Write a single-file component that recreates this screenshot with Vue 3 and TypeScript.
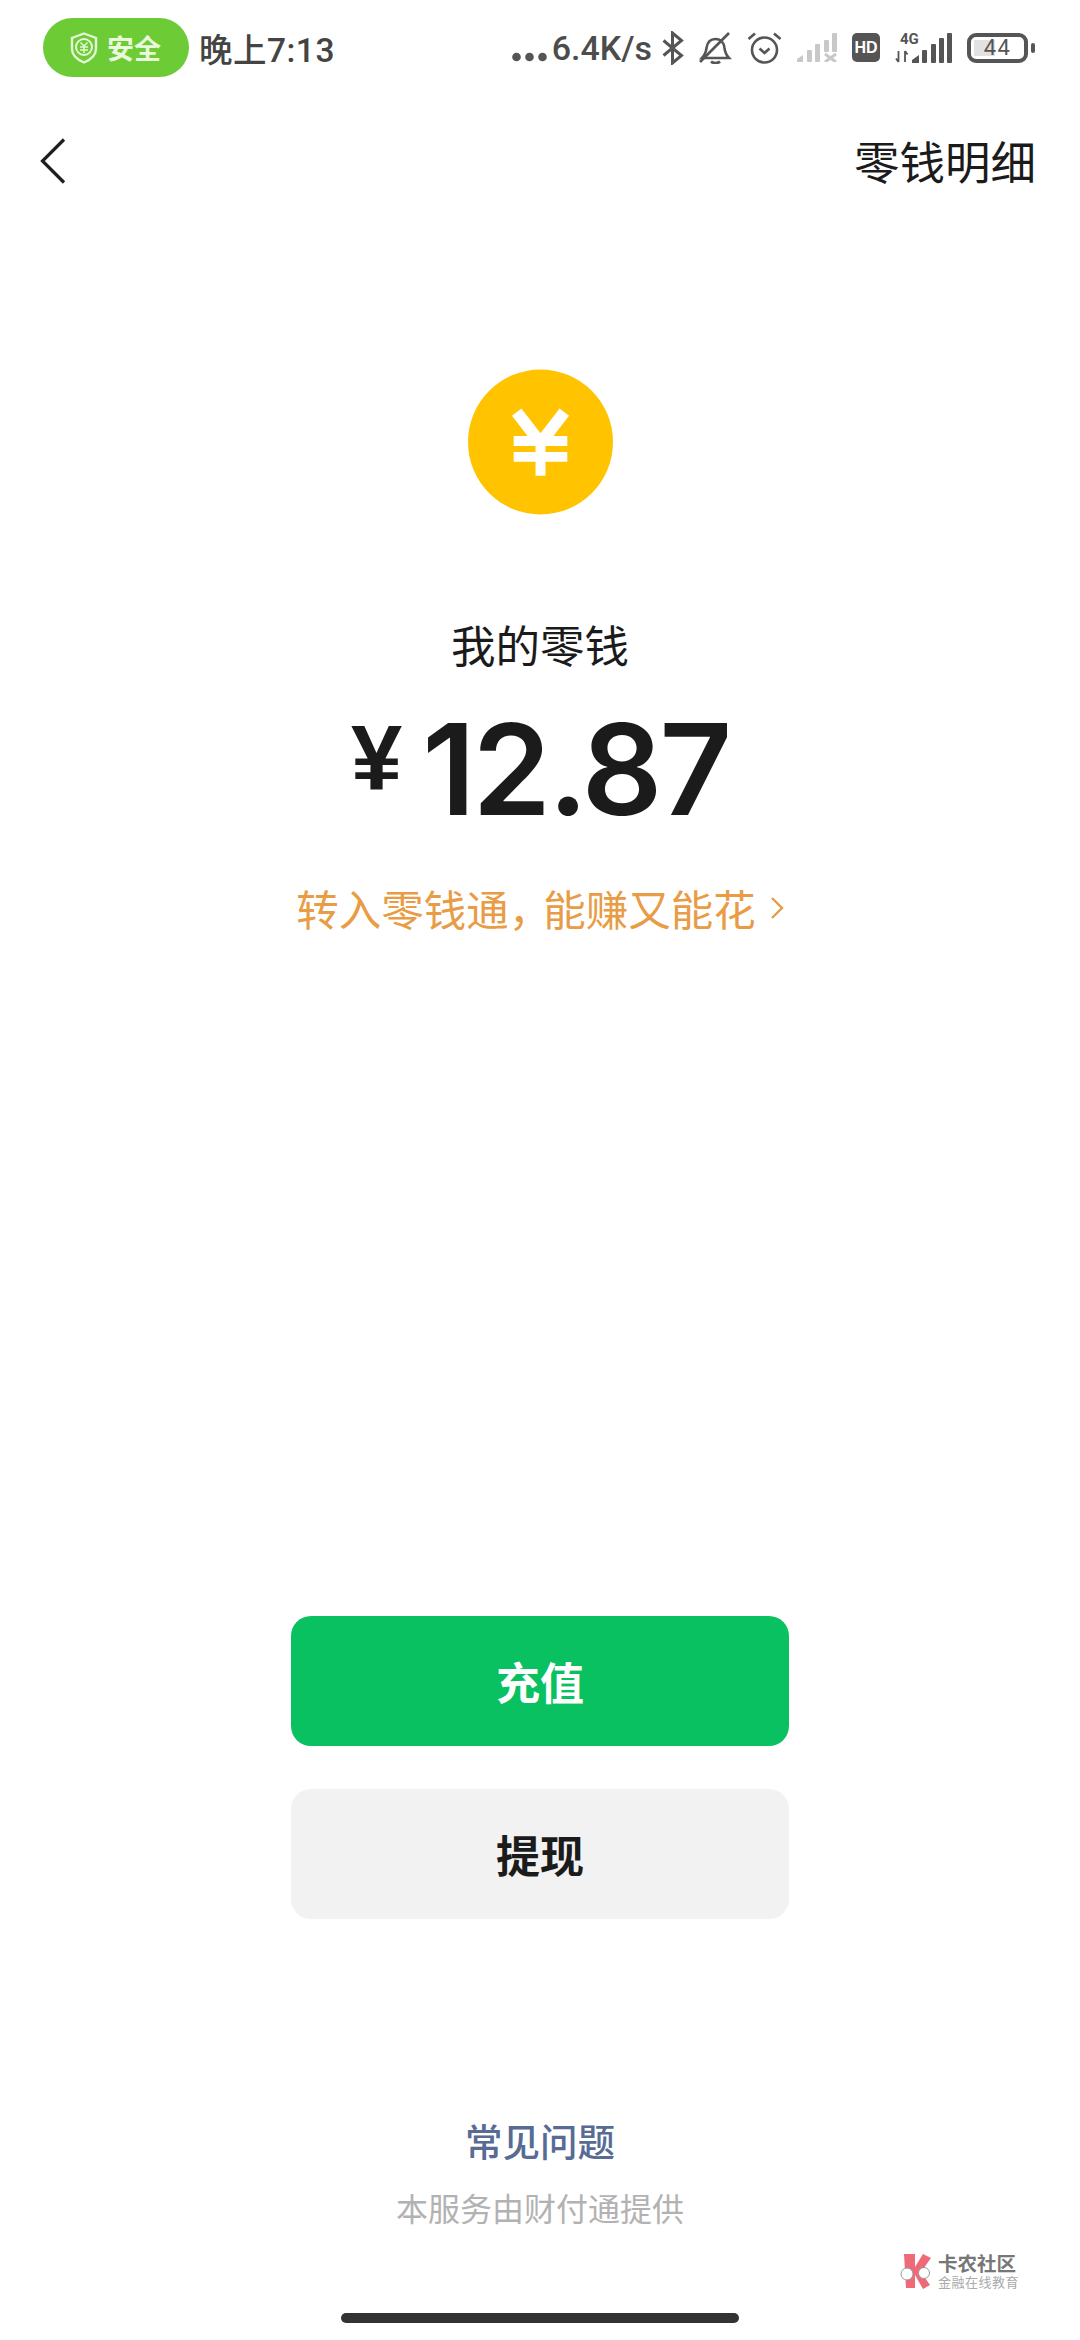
<script setup lang="ts">
const amount = '12.87'
</script>

<template>
  <div class="page">
    <header class="status">
      <div class="status__left">
        <div class="safe">
          <svg class="safe__icon" width="28" height="32" viewBox="0 0 28 32" fill="none" stroke="#e6f7d8" stroke-width="2.400">
            <path d="M14 1.500 26 6v11c0 6-5 10.500-12 13.500C7 27.500 2 23 2 17V6z" />
            <circle cx="14" cy="15" r="8" stroke-width="2" />
            <path d="M10.500 10.500 14 14l3.500-3.500M10 15h8M10 18h8M14 14v7" stroke-width="1.500" />
          </svg>
          <span>安全</span>
        </div>
        <span class="status__time">晚上7:13</span>
      </div>
      <div class="status__right">
        <div class="speed">
          <svg width="35" height="12" viewBox="0 0 35 12" fill="#555">
            <circle cx="4.500" cy="6" r="4.300" />
            <circle cx="17.500" cy="6" r="4.300" />
            <circle cx="30.500" cy="6" r="4.300" />
          </svg>
          <span class="speed__text">6.4K/s</span>
          <svg class="speed__bt" width="22" height="34" viewBox="0 0 22 34" fill="none" stroke="#555" stroke-width="3">
            <path d="M1.500 9.500 19.500 24.500 10.500 32V2L19.500 9.500 1.500 24.500" />
          </svg>
        </div>
        <svg width="33" height="32" viewBox="0 0 33 32" fill="none" stroke="#555" stroke-width="2.600">
          <path d="M3 26c3-3 4-6 4.500-10 .7-5 3.500-9 9-9s8.500 4 9 9c.5 4 1.500 7 4.500 10z" />
          <path d="M12 29.500c2 2 7 2 9 0" />
          <path d="M1 30 30 1" />
        </svg>
        <svg width="35" height="32" viewBox="0 0 35 32" fill="none" stroke="#555" stroke-width="2.600">
          <circle cx="17.500" cy="18" r="12.500" />
          <path d="M12.500 16.500 17.500 21l5-4.500" />
          <path d="M1.500 7 8 1.500M33.500 7 27 1.500" />
        </svg>
        <svg width="40" height="29" viewBox="0 0 40 29" fill="#c8c8c8">
          <path d="M0 29v-3l6-4v7z" />
          <rect x="10" y="17" width="5" height="12" rx="1" />
          <rect x="18" y="11" width="5" height="18" rx="1" />
          <rect x="27" y="7" width="5" height="12" rx="1" />
          <rect x="35" y="0" width="5" height="19" rx="1" />
          <path d="M28 21 39 29M39 21 28 29" stroke="#c8c8c8" stroke-width="3" fill="none" />
        </svg>
        <div class="hd">HD</div>
        <svg width="57" height="31" viewBox="0 0 57 31" fill="#555">
          <text x="5" y="12" class="net">4G</text>
          <path d="M3.500 19v11M1 26.500l2.500 3.500M10 30V19M10 19l2.500 3.500" fill="none" stroke="#555" stroke-width="1.800" />
          <path d="M17 31v-3l7-5v8z" />
          <rect x="27" y="18" width="5" height="13" rx="1" />
          <rect x="36" y="12" width="5" height="19" rx="1" />
          <rect x="44" y="6" width="5" height="25" rx="1" />
          <rect x="52" y="1" width="5" height="30" rx="1" />
        </svg>
        <div class="battery">
          <div class="battery__body">
            <span class="battery__fill" :style="{ width: '44%' }" />
            <span class="battery__num">44</span>
          </div>
          <span class="battery__nub" />
        </div>
      </div>
    </header>

    <nav class="nav">
      <svg width="26" height="46" viewBox="0 0 26 46" fill="none" stroke="#1f1f1f" stroke-width="3.200">
        <path d="M24 1.500 2.500 23 24 44.500" />
      </svg>
      <span class="nav__link">零钱明细</span>
    </nav>

    <main class="main">
      <svg class="coin" width="145" height="146" viewBox="0 0 146 146">
        <circle cx="73" cy="73" r="73" fill="#ffc300" />
        <path d="M49 43 73 74l24-31" fill="none" stroke="#fff" stroke-width="12" />
        <path d="M46 72h54M46 88h54M73 72v35" fill="none" stroke="#fff" stroke-width="10" />
      </svg>
      <div class="label">我的零钱</div>
      <div class="amount">
        <span class="amount__sign">¥</span>
        <span class="amount__num">{{ amount }}</span>
      </div>
      <div class="promo">
        <span>转入零钱通<span class="promo__comma">，</span>能赚又能花</span>
        <svg width="14" height="24" viewBox="0 0 14 24" fill="none" stroke="#e89c45" stroke-width="2.400">
          <path d="M2 2l10 10L2 22" />
        </svg>
      </div>
    </main>

    <div class="actions">
      <button class="btn btn--primary">充值</button>
      <button class="btn btn--plain">提现</button>
    </div>

    <footer class="foot">
      <div class="foot__faq">常见问题</div>
      <div class="foot__note">本服务由财付通提供</div>
    </footer>

    <div class="home-bar" />

    <div class="mark">
      <svg width="36" height="36" viewBox="0 0 36 36">
        <path d="M4 1h11v34H6z" fill="#ee6a78" />
        <path d="M15 14 23 1l8 4-10 14 9 13-7 4-8-14z" fill="#ee6a78" />
        <circle cx="7" cy="21" r="6" fill="#fff" stroke="#999" stroke-width="1" />
        <circle cx="24" cy="20" r="5.500" fill="#fff" stroke="#999" stroke-width="1" />
      </svg>
      <div class="mark__text">
        <div class="mark__name">卡农社区</div>
        <div class="mark__sub">金融在线教育</div>
      </div>
    </div>
  </div>
</template>

<style scoped>
.page {
  position: relative;
  width: 1080px;
  height: 2340px;
  display: flex;
  flex-direction: column;
  background: #fff;
  overflow: hidden;
  font-family: "Noto Sans CJK SC", "Noto Sans", sans-serif;
  color: #1b1b1b;
}
.status {
  display: flex;
  justify-content: space-between;
  align-items: center;
  height: 59px;
  margin-top: 18px;
  padding: 0 45px 0 43px;
}
.status__left {
  display: flex;
  align-items: center;
  gap: 10px;
}
.safe {
  width: 146px;
  height: 59px;
  box-sizing: border-box;
  padding-left: 27px;
  display: flex;
  align-items: center;
  gap: 9px;
  border-radius: 30px;
  background: #6dcb35;
  color: #e9f9dc;
  font-size: 27px;
  font-weight: 700;
}
.status__time {
  font-family: Roboto, "Noto Sans CJK SC", sans-serif;
  font-size: 33.500px;
  font-weight: 500;
  color: #444;
  letter-spacing: 0.500px;
}
.status__right {
  display: flex;
  align-items: center;
  gap: 15px;
}
.speed {
  display: flex;
  align-items: center;
  gap: 5px;
}
.speed svg:first-child {
  margin-top: 18px;
}
.speed__text {
  font-family: Roboto, sans-serif;
  font-size: 34px;
  font-weight: 500;
  line-height: 44px;
  color: #4c4c4c;
}
.speed__bt {
  margin-left: 5px;
}
.net {
  font-family: Roboto, sans-serif;
  font-size: 15px;
  font-weight: 700;
}
.hd {
  width: 28px;
  height: 29px;
  border-radius: 5px;
  background: #555;
  color: #fff;
  font-family: "Liberation Sans", sans-serif;
  font-size: 16px;
  font-weight: 700;
  line-height: 29px;
  text-align: center;
}
.battery {
  display: flex;
  align-items: center;
  gap: 3px;
}
.battery__body {
  position: relative;
  box-sizing: border-box;
  width: 61px;
  height: 30px;
  padding: 3px;
  border: 4px solid #555;
  border-radius: 9px;
}
.battery__fill {
  display: block;
  height: 100%;
  background: #e2e2e2;
}
.battery__num {
  position: absolute;
  inset: 0;
  text-align: center;
  font-family: Roboto, sans-serif;
  font-size: 22px;
  line-height: 22px;
  letter-spacing: 1.500px;
  color: #555;
}
.battery__nub {
  width: 4px;
  height: 10px;
  border-radius: 2px;
  background: #555;
}
.nav {
  display: flex;
  justify-content: space-between;
  align-items: center;
  height: 46px;
  margin-top: 61px;
  padding: 0 44px 0 40px;
}
.nav__link {
  font-size: 45.500px;
  line-height: 46px;
  margin-top: -3px;
  color: #1b1b1b;
}
.main {
  display: flex;
  flex-direction: column;
  align-items: center;
  margin-top: 185px;
}
.label {
  margin-top: 99px;
  font-size: 44.500px;
  line-height: 60px;
}
.amount {
  display: flex;
  align-items: flex-start;
  gap: 20px;
  margin-top: 30px;
  height: 130px;
}
.amount__sign {
  font-family: "Liberation Sans", sans-serif;
  font-size: 92px;
  font-weight: 700;
  line-height: 92px;
  margin-top: 8px;
}
.amount__num {
  font-family: Inter, sans-serif;
  font-size: 126px;
  font-weight: 600;
  line-height: 130px;
  letter-spacing: -3px;
}
.promo {
  display: flex;
  align-items: center;
  gap: 14px;
  margin-top: 46px;
  font-size: 42.500px;
  line-height: 56px;
  color: #e89c45;
}
.promo__comma {
  letter-spacing: -8px;
}
.actions {
  display: flex;
  flex-direction: column;
  align-items: center;
  gap: 43px;
  margin-top: 680px;
}
.btn {
  width: 498px;
  height: 130px;
  border: 0;
  border-radius: 20px;
  font-family: inherit;
  font-size: 44px;
  font-weight: 700;
}
.btn--primary {
  background: #09c160;
  color: #fff;
}
.btn--plain {
  background: #f2f2f2;
  color: #1b1b1b;
}
.foot {
  display: flex;
  flex-direction: column;
  align-items: center;
  margin-top: 191px;
}
.foot__faq {
  font-size: 37.500px;
  font-weight: 500;
  line-height: 60px;
  color: #576b95;
}
.foot__note {
  margin-top: 15px;
  font-size: 32px;
  line-height: 44px;
  color: #b2b2b2;
}
.home-bar {
  align-self: center;
  width: 398px;
  height: 10px;
  margin-top: auto;
  margin-bottom: 17px;
  border-radius: 5px;
  background: #333;
}
.mark {
  position: absolute;
  left: 900px;
  top: 2252px;
  display: flex;
  align-items: center;
  gap: 2px;
}
.mark__name {
  font-size: 19.500px;
  font-weight: 700;
  line-height: 22px;
  color: #777;
}
.mark__sub {
  font-size: 13px;
  line-height: 15px;
  letter-spacing: 0.500px;
  color: #aaa;
}
</style>
